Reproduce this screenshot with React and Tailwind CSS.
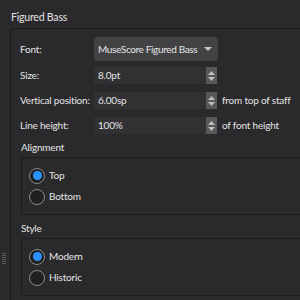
import { useState } from "react";

function Spin({ value, suffix }) {
  return (
    <div className="flex items-center h-[17px]">
      <div className="w-[112px] h-full bg-[#313134] flex items-center pl-[4px] text-[#e4e4e4]">{value}</div>
      <div className="w-[11px] h-full bg-[#58585b] flex flex-col items-center justify-center gap-[2px]">
        <svg width="7" height="4" viewBox="0 0 7 4"><path d="M0 4L3.5 0L7 4Z" fill="#bdbdbd" /></svg>
        <svg width="7" height="4" viewBox="0 0 7 4"><path d="M0 0L3.5 4L7 0Z" fill="#bdbdbd" /></svg>
      </div>
      {suffix && <span className="ml-[5px] text-[#e4e4e4] whitespace-nowrap">{suffix}</span>}
    </div>
  );
}

function Radio({ label, checked, onClick }) {
  return (
    <button onClick={onClick} className="flex items-center gap-[4px] h-[21px] text-[#e4e4e4] whitespace-nowrap">
      <span className="w-[16px] h-[16px] rounded-full border-[1.5px] border-[#8c8c8e] bg-[#202022] flex items-center justify-center">
        {checked && <span className="w-[9px] h-[9px] rounded-full bg-[#2a93ff]" />}
      </span>
      {label}
    </button>
  );
}

function Group({ title, children }) {
  return (
    <div>
      <div className="h-[23px] flex items-center pt-[3px] text-[#e4e4e4]">{title}</div>
      <div className="border border-[#1c1c1e] rounded-[3px] w-[300px] px-[7px] py-[7px] flex flex-col">
        {children}
      </div>
    </div>
  );
}

export default function App() {
  const [align, setAlign] = useState("top");
  const [style, setStyle] = useState("modern");

  return (
    <div className="w-[300px] h-[300px] overflow-hidden relative bg-[#2a2a2c] text-[10px] tracking-[-0.2px] font-['Lato',sans-serif]">
      <div className="absolute left-[2px] top-[253px] flex flex-col gap-[1px]">
        {[0, 1, 2, 3, 4, 5].map(i => (
          <span key={i} className="w-[4px] h-[1px] bg-[#5a5a5c]" />
        ))}
      </div>

      <div className="pl-[11px] h-[28px] flex items-center pt-[8px] text-[#e4e4e4] text-[10.5px]">Figured Bass</div>

      <div className="ml-[10px] border border-[#1c1c1e] rounded-[4px] w-[320px] pl-[9px] pt-[8px] pb-[20px] whitespace-nowrap">
        <div className="flex flex-col">
          <div className="flex items-center h-[24px]">
            <span className="w-[74px] text-[#e4e4e4]">Font:</span>
            <div className="w-[124px] h-[24px] bg-[#424245] rounded-[3px] flex items-center justify-between pl-[4px] pr-[6px] text-[#e4e4e4]">
              <span className="tracking-[-0.35px]">MuseScore Figured Bass</span>
              <svg className="shrink-0" width="8" height="4" viewBox="0 0 8 4"><path d="M0 0L4 4L8 0Z" fill="#c8c8c8" /></svg>
            </div>
          </div>

          <div className="flex items-center mt-[6px]">
            <span className="w-[74px] text-[#e4e4e4]">Size:</span>
            <Spin value="8.0pt" />
          </div>

          <div className="flex items-center mt-[8px]">
            <span className="w-[74px] text-[#e4e4e4]">Vertical position:</span>
            <Spin value="6.00sp" suffix="from top of staff" />
          </div>

          <div className="flex items-center mt-[8px]">
            <span className="w-[74px] text-[#e4e4e4]">Line height:</span>
            <Spin value="100%" suffix="of font height" />
          </div>
        </div>

        <div className="pl-[1px]">
          <Group title="Alignment">
            <Radio label="Top" checked={align === "top"} onClick={() => setAlign("top")} />
            <Radio label="Bottom" checked={align === "bottom"} onClick={() => setAlign("bottom")} />
          </Group>
        </div>

        <div className="pl-[1px]">
          <Group title="Style">
            <Radio label="Modern" checked={style === "modern"} onClick={() => setStyle("modern")} />
            <Radio label="Historic" checked={style === "historic"} onClick={() => setStyle("historic")} />
          </Group>
        </div>
      </div>
    </div>
  );
}
